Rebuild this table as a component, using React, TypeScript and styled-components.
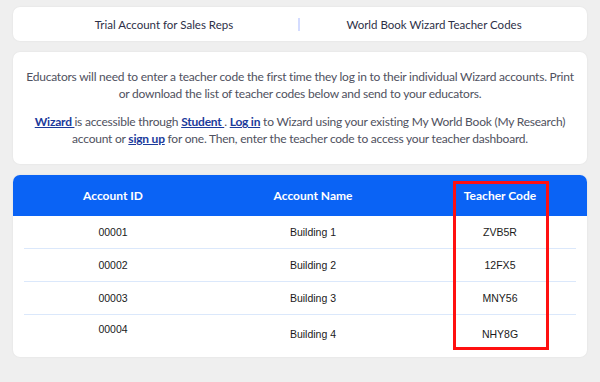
import React from 'react';
import styled, { createGlobalStyle } from 'styled-components';

const rows = [
  { id: '00001', name: 'Building 1', code: 'ZVB5R' },
  { id: '00002', name: 'Building 2', code: '12FX5' },
  { id: '00003', name: 'Building 3', code: 'MNY56' },
  { id: '00004', name: 'Building 4', code: 'NHY8G' },
];

export default function App() {
  return (
    <>
      <GlobalStyle />
      <StyledPage>
        <StyledTabs>
          <StyledTab $side="left">Trial Account for Sales Reps</StyledTab>
          <StyledTabDivider />
          <StyledTab $side="right">World Book Wizard Teacher Codes</StyledTab>
        </StyledTabs>

        <StyledInfoCard>
          <p>
            Educators will need to enter a teacher code the first time they log in to their individual Wizard
            accounts. Print
            <br />
            or download the list of teacher codes below and send to your educators.
          </p>
          <p>
            <StyledLink href="#">Wizard </StyledLink> is accessible through <StyledLink href="#">Student </StyledLink>.{' '}
            <StyledLink href="#">Log in</StyledLink> to Wizard using your existing My World Book (My Research)
            <br />
            account or <StyledLink href="#">sign up</StyledLink> for one. Then, enter the teacher code to access your
            teacher dashboard.
          </p>
        </StyledInfoCard>

        <StyledTableCard>
          <StyledHeader>
            <span>Account ID</span>
            <span>Account Name</span>
            <span>Teacher Code</span>
          </StyledHeader>
          {rows.map((row, i) => {
            const last = i === rows.length - 1;
            return (
              <StyledRow key={row.id} $last={last}>
                <StyledCell $top={last}>{row.id}</StyledCell>
                <StyledCell>{row.name}</StyledCell>
                <StyledCell>{row.code}</StyledCell>
              </StyledRow>
            );
          })}
          <StyledHighlight />
        </StyledTableCard>
      </StyledPage>
    </>
  );
}

const GlobalStyle = createGlobalStyle`
  html, body {
    margin: 0;
    background: #efefef;
  }
  * {
    box-sizing: border-box;
  }
`;

const StyledPage = styled.div`
  display: flex;
  flex-direction: column;
  gap: 11px;
  padding: 7px 13px 25px;
  font-family: Lato, 'Open Sans', sans-serif;
`;

const StyledCard = styled.div`
  background: #ffffff;
  border-radius: 7px;
  box-shadow: 0 0 2px rgba(0, 0, 0, 0.08);
`;

const StyledTabs = styled(StyledCard)`
  display: flex;
  align-items: center;
  height: 34px;
`;

const StyledTab = styled.div<{ $side: 'left' | 'right' }>`
  flex: 1;
  text-align: center;
  padding: ${(p) => (p.$side === 'left' ? '0 0 0 17px' : '0 19px 0 0')};
  font-size: 11.5px;
  color: #2d3047;
`;

const StyledTabDivider = styled.div`
  width: 2px;
  height: 13px;
  background: #d4dcff;
`;

const StyledInfoCard = styled(StyledCard)`
  padding: 16px 10px 17px;
  text-align: center;
  font-size: 12px;
  letter-spacing: -0.22px;
  line-height: 17px;
  color: #4f5160;
  white-space: nowrap;

  p {
    margin: 0;
  }
  p + p {
    margin-top: 11px;
  }
`;

const StyledLink = styled.a`
  color: #1b3a9b;
  font-weight: 700;
  text-decoration: underline;
`;

const StyledTableCard = styled(StyledCard)`
  position: relative;
  padding-bottom: 5px;
  overflow: hidden;
`;

const StyledHeader = styled.div`
  display: grid;
  grid-template-columns: 200px 200px 1fr;
  align-items: center;
  height: 41px;
  background: #0a63f5;
  color: #ffffff;
  font-weight: 700;
  font-size: 12px;
  text-align: center;
`;

const StyledRow = styled.div<{ $last?: boolean }>`
  display: grid;
  grid-template-columns: 178px 222px 1fr;
  align-items: center;
  margin: 0 11px;
  height: ${(p) => (p.$last ? '37px' : '33px')};
  border-bottom: ${(p) => (p.$last ? 'none' : '1px solid #dbe8fb')};
  font-family: 'Liberation Sans', Arial, sans-serif;
  font-size: 10.5px;
  color: #1a1a1a;
`;

const StyledCell = styled.div<{ $top?: boolean }>`
  text-align: center;
  align-self: ${(p) => (p.$top ? 'start' : 'center')};
  padding-top: ${(p) => (p.$top ? '8px' : '0')};
`;

const StyledHighlight = styled.div`
  position: absolute;
  left: 440px;
  top: 6px;
  width: 96px;
  height: 169px;
  border: 3px solid #ff1010;
  pointer-events: none;
`;
